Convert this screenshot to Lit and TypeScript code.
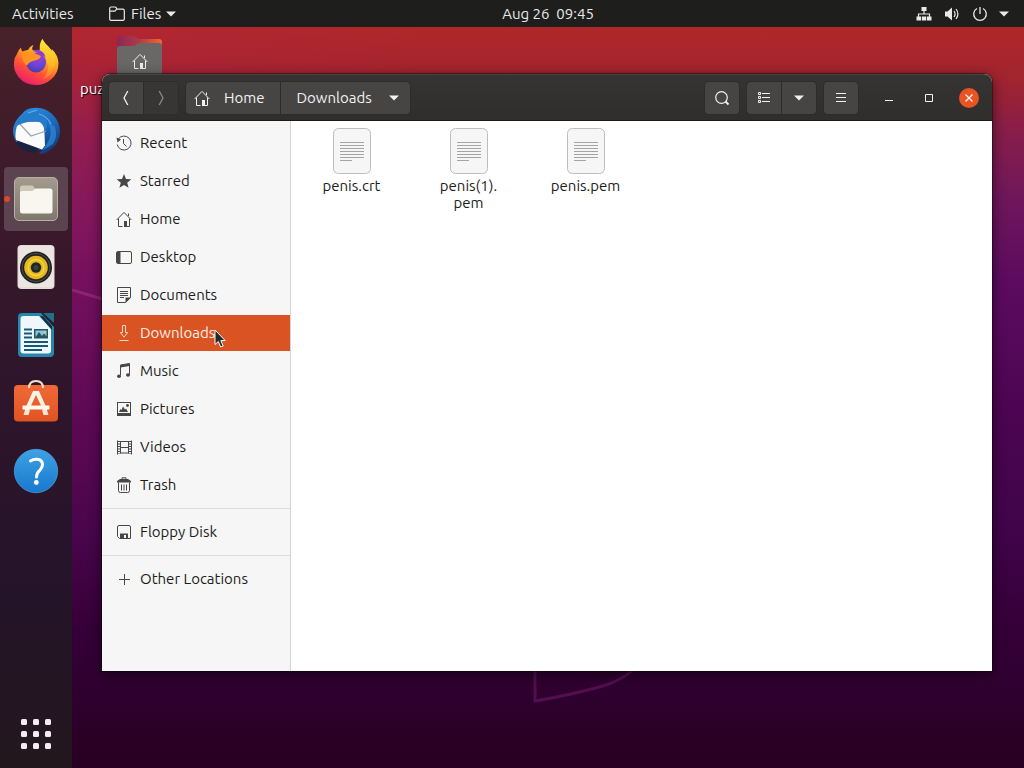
import { LitElement, html, css, svg, nothing } from "lit";
import { customElement, property, state } from "lit/decorators.js";
import { classMap } from "lit/directives/class-map.js";

/* 16px symbolic icons, drawn in the current colour */
const symbolic: Record<string, unknown> = {
  recent: svg`<path d="M2.2 4.2A7 7 0 1 1 1.2 9.5" fill="none" stroke="currentColor"/><path d="M7.5 4v4.5l3 3" fill="none" stroke="currentColor"/><path d="M.5 2.5 5 4.5 1.5 7.5z" fill="currentColor"/>`,
  starred: svg`<path d="m8 1 2 5 5.3.3-4.1 3.4 1.4 5.1L8 11.9l-4.6 2.9 1.4-5.1L.7 6.3 6 6z" fill="currentColor"/>`,
  home: svg`<path d="M.6 9 8 1.4 15.4 9M2.5 7.5v8h4M9.5 15.5h4v-8M12.5 2.5V5" fill="none" stroke="currentColor"/><path d="M8 10h3v6H8z" fill="currentColor"/>`,
  desktop: svg`<rect x=".5" y="2.5" width="15" height="12" rx="1.5" fill="none" stroke="currentColor"/><path d="M1 3h3.5v11H1z" fill="currentColor"/>`,
  documents: svg`<path d="M1.5.5h13v10l-5 5h-8z" fill="none" stroke="currentColor"/><path d="M4 4.5h8M4 6.5h8M4 8.5h8M4 10.500h4" fill="none" stroke="currentColor"/><path d="M9.500 10.500h5.500L9.500 16z" fill="currentColor"/>`,
  downloads: svg`<path d="M6.500.5h3v7h2.200L8 12.200 4.300 7.500h2.200zM3.500 15.500h9" fill="none" stroke="currentColor"/>`,
  music: svg`<path d="M4.500 12.500V2l9-1.500v11" fill="none" stroke="currentColor"/><path d="M4.500 2 13.500.5v2.500l-9 1.500z" fill="currentColor"/><ellipse cx="3" cy="13.200" rx="2" ry="1.700" fill="currentColor"/><ellipse cx="12" cy="12" rx="2" ry="1.700" fill="currentColor"/>`,
  pictures: svg`<rect x="1.500" y="1.500" width="13" height="13" fill="none" stroke="currentColor"/><path d="M1 12h14v3H1zM3 11l1.500-3 1 1L7 5.500l2 3 1-1 2 3.500z" fill="currentColor"/><circle cx="11.500" cy="4.500" r="1.400" fill="currentColor"/>`,
  videos: svg`<path d="M4.500 2v12.500M12.500 2v12.500M4 2.500h9M4 8.500h9M4 14h9" fill="none" stroke="currentColor"/><path d="M1.500 1.500v14M15.500 1.500v14" stroke="currentColor" stroke-width="1"/><path d="M3 2v13M14 2v13" stroke="currentColor" stroke-width="2" stroke-dasharray="1 1.500"/>`,
  trash: svg`<path d="M2.500 5.500v8q0 2 2 2h7q2 0 2-2v-8M5.500 7.500v6M8 7.500v6M10.500 7.500v6M6 2V.8h4V2" fill="none" stroke="currentColor"/><path d="M1 5.500V4l3-2h8l3 2v1.500z" fill="currentColor"/>`,
  floppy: svg`<path d="M3 1.500h10q1.500 0 1.500 1.500v11.500H3.500l-2-2V3q0-1.500 1.500-1.500z" fill="none" stroke="currentColor"/><path d="M4 15V9.500h8V15h-2v-4H8v4z" fill="currentColor"/>`,
  plus: svg`<path d="M8.500 3v11M3 8.500h11" fill="none" stroke="currentColor"/>`,
  back: svg`<path d="M9.800 1 6 8l3.800 7" fill="none" stroke="currentColor" stroke-width="1.300"/>`,
  forward: svg`<path d="M6.200 1 10 8l-3.800 7" fill="none" stroke="currentColor" stroke-width="1.300"/>`,
  search: svg`<circle cx="7.500" cy="7.500" r="5.800" fill="none" stroke="currentColor" stroke-width="1.200"/><path d="m11.500 11.500 3 3" stroke="currentColor" stroke-width="1.800"/>`,
  list: svg`<path d="M6 3.500h8M6 7.500h8M6 11.500h8" stroke="currentColor"/><path d="M2.500 2.500h2v2h-2zM2.500 6.500h2v2h-2zM2.500 10.500h2v2h-2z" fill="none" stroke="currentColor"/>`,
  menu: svg`<path d="M3 3.500h10M3 7.500h10M3 11.500h10" stroke="currentColor"/>`,
  down: svg`<path d="M3 5.500h10l-5 5z" fill="currentColor"/>`,
  minimize: svg`<path d="M4 10.500h8" stroke="currentColor"/>`,
  maximize: svg`<path d="M4.500 4.500h7v7h-7z" fill="none" stroke="currentColor"/>`,
  close: svg`<path d="m4.500 4.500 7 7M11.500 4.500l-7 7" stroke="currentColor" stroke-width="1.400"/>`,
  folder: svg`<path d="M.7 13V2.500q0-1.500 1.500-1.500h3.600q1.200 0 1.600 1l.5 1.200h6q1.400 0 1.400 1.500V13q0 1.300-1.300 1.300H2Q.7 14.300.7 13zM.7 5.200h5.200l1.800-2" fill="none" stroke="currentColor" stroke-width="1.200"/>`,
  network: svg`<path d="M5.500 1h5v4h-5zM.5 10.500h4.500v4H.5zM5.800 10.500h4.500v4H5.800zM11 10.500h4.500v4H11z" fill="currentColor"/><path d="M8 5v3M2.500 11V8h11v3" fill="none" stroke="currentColor" stroke-width="1.200"/>`,
  volume: svg`<path d="M1 5.500h2.500L8 1.500v13l-4.500-4H1z" fill="currentColor"/><path d="M10 5q2.200 3 0 6M12 3q3.800 5 0 10" fill="none" stroke="currentColor" stroke-width="1.200"/>`,
  power: svg`<path d="M5 2.500a6.300 6.300 0 1 0 6 0M8 1v7" fill="none" stroke="currentColor" stroke-width="1.300"/>`,
};

const icon = (name: string) =>
  html`<svg class="sym" viewBox="0 0 16 16" width="16" height="16" aria-hidden="true">${symbolic[name]}</svg>`;

/* 48px colour icons of the dock */
const launchers: { name: string; active?: boolean; art: unknown }[] = [
  {
    name: "Firefox",
    art: svg`<defs>
      <linearGradient id="fx" x1=".8" y1=".05" x2=".3" y2="1"><stop offset="0" stop-color="#ffe93c"/><stop offset=".4" stop-color="#ffa01f"/><stop offset=".7" stop-color="#ff4b3a"/><stop offset="1" stop-color="#ea1c70"/></linearGradient>
      <linearGradient id="fy" x1=".5" y1="0" x2=".5" y2="1"><stop offset="0" stop-color="#ffe93c"/><stop offset=".6" stop-color="#ffbd25"/><stop offset="1" stop-color="#ff7a2c"/></linearGradient>
      <radialGradient id="fp" cx=".6" cy=".2" r=".9"><stop offset="0" stop-color="#a63adb"/><stop offset=".5" stop-color="#6c45d8"/><stop offset="1" stop-color="#453aa8"/></radialGradient></defs>
      <g transform="translate(0 -1)"><path d="M5 16q1-4 4-6.500 0 2.500 1.500 4Q13 12 16 12q2-4 5.500-5-2 3-1 5h8q-2-5 1.800-11 2 4 6 7.500 2 2 3 5 1-1 .5-2.500Q46 17 46.500 25 46.500 35 39.500 41 33 47 24 47 13 47 6.500 39 1 32 2 24q.5-5 3-8z" fill="url(#fx)"/>
      <path d="M30.300 1q2 4 6 7.500 9 8 7 18-2 12-13 15 8-7 5-16-1-7-7-10-2-6 2-14.500z" fill="url(#fy)" opacity=".85"/>
      <circle cx="24" cy="24.500" r="10" fill="url(#fp)"/>
      <path d="M9 13q3 2 8 1 4-.5 7 2l5 2q-1 3.500-6 4.500-6 1-8 5-4-1-6-14.500z" fill="#ff9422"/><path d="M20 13q5-2.500 9 0 4 2 4.500 7-2-3.500-6-3-2-3.500-7.500-4z" fill="#8a3dcc"/></g>`,
  },
  {
    name: "Thunderbird",
    art: svg`<defs><linearGradient id="tb" x1=".2" y1="0" x2=".8" y2="1"><stop offset="0" stop-color="#2a8fe0"/><stop offset=".55" stop-color="#1c65b8"/><stop offset="1" stop-color="#13366f"/></linearGradient></defs>
      <path d="M10 7Q15 0 25 .8q9 .5 15 6.200 8 7.500 8 17 0 11-8 17.500-6 5.500-13 5.500l3-4Q12 45 5 36q-6-9-3-18 3-7 8-11z" fill="url(#tb)"/>
      <path d="M4 36q6 9 19 10l5-5-21-8z" fill="#182342"/>
      <path d="m7 15 25-.5 1 24-3 4L4 33q-2-9 3-18z" fill="#fafafa"/>
      <path d="m7 16 12 13 15-5" fill="none" stroke="#9ba5b3" stroke-width="1.200"/>
      <path d="M10 8Q17 3 25 5q11 2 10 15l-3 5q1-10-8-10.500Q12 14 3 20q2-8 7-12z" fill="#267bca"/>
      <path d="M34 13q8 9 2 22l-5 8 10-6q5-7 2-17z" fill="#2d83d3" opacity=".8"/><path d="m16 6 9-3M27 7q8 2 12 10" fill="none" stroke="#58b5ee" stroke-width="1.200"/>`,
  },
  {
    name: "Files",
    active: true,
    art: svg`<defs><linearGradient id="fm" x2="0" y2="1"><stop offset="0" stop-color="#a49b8f"/><stop offset="1" stop-color="#7f776c"/></linearGradient></defs>
      <rect x="2.500" y="2.500" width="43" height="43" rx="4.500" fill="url(#fm)" stroke="#b8aea2"/>
      <path d="M8 17v-4q0-2.500 2.500-2.500h10l3.500 4V18H8z" fill="#cfc7ba"/>
      <path d="M8 18q0-2 2-2h10l4-2.500h14q2.500 0 2.500 2.500v20q0 2.500-2.500 2.500H10.500Q8 38.500 8 36z" fill="#f9f6ef"/>`,
  },
  {
    name: "Rhythmbox",
    art: svg`<rect x="5.500" y="2" width="37" height="44" rx="4" fill="#e3dbd6"/><rect x="6.500" y="3" width="35" height="41" rx="3" fill="#ece5e1"/>
      <circle cx="24" cy="24.500" r="16" fill="#202225"/><circle cx="24" cy="24.500" r="14" fill="none" stroke="#4c4c4a"/>
      <circle cx="24" cy="24.500" r="11.800" fill="#e6b81c"/><circle cx="24" cy="24.500" r="8" fill="none" stroke="#f5d34b" stroke-width="1.500"/><circle cx="24" cy="24.500" r="5.200" fill="#1d2726"/><circle cx="24" cy="24.500" r="2.500" fill="#36443e"/>`,
  },
  {
    name: "LibreOffice Writer",
    art: svg`<path d="M10 2h19l13 14v26q0 4-4 4H10q-4 0-4-4V6q0-4 4-4z" fill="#2687ac"/><path d="M31 2h11v10z" fill="#1c7389"/>
      <path d="M11.500 5H27l12 13v21.500q0 3-3 3H11.500q-3 0-3-3V8q0-3 3-3z" fill="#f0f6fa"/><path d="M28 5h3l9 10v4z" fill="#113247"/>
      <path d="M12 18.500h8M12 22.500h8M12 26.500h8M12 31h24M12 35h24M12 39h18" stroke="#135b75" stroke-width="2"/>
      <rect x="22" y="18" width="14" height="9.500" fill="#135b75"/><rect x="23.500" y="19.500" width="11" height="6.500" fill="#8fc4df"/><path d="m23 27 4-6 3 4 2-2.500 4 4.500z" fill="#28535f"/><circle cx="33" cy="21" r="1.300" fill="#f3c83d"/>`,
  },
  {
    name: "Ubuntu Software",
    art: svg`<defs><linearGradient id="us" x2="0" y2="1"><stop offset="0" stop-color="#ef6a37"/><stop offset="1" stop-color="#e15222"/></linearGradient></defs>
      <rect x="2" y="6" width="44" height="36.500" rx="4" fill="url(#us)"/>
      <path d="M17 9q0-7 7-7t7 7" fill="none" stroke="#f4dfc7" stroke-width="2"/>
      <path d="M21 12h6l8.500 19H31l-7-15-7 15h-4.500z" fill="#fbf1e5"/><path d="M10.500 26.500h27v4h-27z" fill="#fff9ee"/><path d="m13 31-1.500 5h5l1.500-5zM30 31l1.500 5h5L35 31z" fill="#f7e5d4"/>`,
  },
  {
    name: "Help",
    art: svg`<defs><linearGradient id="hp" x2="0" y2="1"><stop offset="0" stop-color="#3da2e6"/><stop offset="1" stop-color="#1978cc"/></linearGradient></defs>
      <circle cx="24" cy="24" r="21.700" fill="url(#hp)" stroke="#57b0ec" stroke-width=".6"/>
      <path d="M18.500 14q3-2 6.500-1.700 5.500.4 5.500 5.500 0 3-3 5.800-3 2.600-3 6.400" fill="none" stroke="#fff" stroke-width="3" stroke-linecap="round"/><circle cx="24.300" cy="35.500" r="2.400" fill="#fff"/>`,
  },
];

const places = [
  ["recent", "Recent"], ["starred", "Starred"], ["home", "Home"], ["desktop", "Desktop"],
  ["documents", "Documents"], ["downloads", "Downloads"], ["music", "Music"], ["pictures", "Pictures"],
  ["videos", "Videos"], ["trash", "Trash"], null, ["floppy", "Floppy Disk"], null, ["plus", "Other Locations"],
] as (string[] | null)[];

const base = css`
  * { box-sizing: border-box; }
  button { font: inherit; color: inherit; margin: 0; padding: 0; border: 0; background: none; display: flex; align-items: center; justify-content: center; }
  a { color: inherit; text-decoration: none; }
  svg { display: block; flex: none; }
`;

@customElement("top-bar")
class TopBar extends LitElement {
  static styles = [base, css`
    :host { display: grid; grid-template-columns: 72px 1fr auto 1fr; align-items: center; height: 27px; background: #1e1e1d; color: #e9e9e9; white-space: nowrap; }
    .activities { padding-left: 12px; justify-content: start; }
    .app { justify-self: start; margin-left: 37px; gap: 6px; }
    .app .sym:last-child { margin-left: -4px; }
    .status { justify-self: end; gap: 12px; margin-right: 16px; }
    .status .sym:last-child { margin-left: -4px; margin-right: -4px; }
    .clock { white-space: pre; }
  `];
  render() {
    return html`
      <button class="activities">Activities</button>
      <button class="app">${icon("folder")}Files${icon("down")}</button>
      <button class="clock">Aug 26  09:45</button>
      <button class="status" aria-label="System menu">${icon("network")}${icon("volume")}${icon("power")}${icon("down")}</button>`;
  }
}

@customElement("app-dock")
class AppDock extends LitElement {
  static styles = [base, css`
    :host { display: flex; flex-direction: column; align-items: center; gap: 4px; padding: 4px 4px 2px; background: linear-gradient(#48212a, #3c1a2a 22%, #30152b 45%, #25142a 75%, #23171d); }
    .tile { position: relative; width: 64px; height: 64px; border-radius: 4px; }
    .tile.active { background: #5b434f; }
    .dot { position: absolute; left: 0; top: 29px; width: 6px; height: 6px; border-radius: 3px; background: #d9482b; }
    .apps { margin-top: auto; }
  `];
  render() {
    return html`
      ${launchers.map((l) => html`
        <button class=${classMap({ tile: true, active: !!l.active })} aria-label=${l.name}>
          ${l.active ? html`<span class="dot"></span>` : nothing}
          <svg viewBox="0 0 48 48" width="48" height="48">${l.art}</svg>
        </button>`)}
      <button class="tile apps" aria-label="Show Applications">
        <svg viewBox="0 0 30 30" width="30" height="30" fill="#f4ecf2">
          ${[0, 12, 24].map((y) => [0, 12, 24].map((x) => svg`<rect x=${x} y=${y} width="6" height="6" rx="1.500"/>`))}
        </svg>
      </button>`;
  }
}

@customElement("file-item")
class FileItem extends LitElement {
  @property({ attribute: false }) lines: string[] = [];
  static styles = [base, css`
    .file { width: 100%; flex-direction: column; gap: 2px; line-height: 17px; color: #1c1c1c; }
  `];
  render() {
    return html`
      <button class="file">
        <svg viewBox="0 0 48 48" width="48" height="48" aria-hidden="true">
          <rect x="5.500" y="1.500" width="37" height="45" rx="5" fill="#f6f6f6" stroke="#bdbdbd"/>
          <path d="M12 15.500h24M12 18.500h24M12 21.500h24M12 24.500h24M12 27.500h24M12 30.500h24M12 33.500h12" stroke="#a4a4a4"/>
        </svg>
        <span>${this.lines.map((l, i) => html`${i ? html`<br />` : nothing}${l}`)}</span>
      </button>`;
  }
}

@customElement("files-window")
class FilesWindow extends LitElement {
  @state() current = "Downloads";
  static styles = [base, css`
    :host { display: flex; flex-direction: column; border-radius: 8px 8px 0 0; background: #fff; box-shadow: 0 0 1px 1px rgba(0, 0, 0, 0.4), 0 3px 14px rgba(0, 0, 0, 0.55); }
    .header { display: flex; align-items: center; height: 47px; padding: 0 11px 0 7px; border-radius: 8px 8px 0 0; background: linear-gradient(#353433, #2f2e2d); border-top: 1px solid #454340; border-bottom: 1px solid #1b1a19; color: #f2f2f2; }
    .group { display: flex; border-radius: 4px; background: #474543; box-shadow: 0 0 0 1px #2d2c2b; }
    .group button { height: 32px; width: 34px; }
    .group button + button { border-left: 1px solid #2c2b2a; width: 35px; }
    .group .off { background: #383635; color: #8a8886; border-radius: 0 4px 4px 0; }
    .path { margin-left: 8px; margin-right: auto; }
    .path .crumb { width: auto; padding: 0 16px 0 8px; gap: 14px; }
    .path .crumb + .crumb { width: auto; padding: 0 8px 0 15px; }
    .tools { display: flex; gap: 8px; margin-right: 19px; }
    .controls { display: flex; gap: 16px; }
    .controls button { width: 24px; height: 24px; }
    .round { width: 20px; height: 20px; border-radius: 10px; background: #e95420; display: grid; place-items: center; }
    .body { flex: 1; display: grid; grid-template-columns: 189px 1fr; min-height: 0; }
    .sidebar { display: flex; flex-direction: column; gap: 2px; padding-top: 4px; background: #f6f6f6; border-right: 1px solid #d4d4d4; color: #1c1c1c; }
    .place { position: relative; display: flex; align-items: center; gap: 8px; height: 36px; padding-left: 14px; white-space: nowrap; }
    .place .sym { color: #474747; }
    .place.selected { background: #d95323; color: #fdeee6; }
    .place.selected .sym { color: #fdd9c8; }
    .rule { width: 100%; height: 1px; margin: 3px 0; border: 0; background: #dcdcdc; }
    .pointer { position: absolute; left: 112px; top: 14px; }
    .files { display: grid; grid-template-columns: repeat(auto-fill, 117px); align-content: start; padding: 6px 2px; }
  `];
  render() {
    return html`
      <header class="header">
        <div class="group">
          <button aria-label="Back">${icon("back")}</button>
          <button class="off" aria-label="Forward">${icon("forward")}</button>
        </div>
        <div class="group path">
          <button class="crumb">${icon("home")}Home</button>
          <button class="crumb">Downloads${icon("down")}</button>
        </div>
        <div class="tools">
          <div class="group"><button aria-label="Search">${icon("search")}</button></div>
          <div class="group">
            <button aria-label="List view">${icon("list")}</button>
            <button aria-label="View options">${icon("down")}</button>
          </div>
          <div class="group"><button aria-label="Menu">${icon("menu")}</button></div>
        </div>
        <div class="controls">
          <button aria-label="Minimize">${icon("minimize")}</button>
          <button aria-label="Maximize">${icon("maximize")}</button>
          <button aria-label="Close"><span class="round">${icon("close")}</span></button>
        </div>
      </header>
      <div class="body">
        <nav class="sidebar" aria-label="Places">
          ${places.map((p) => p
            ? html`<a href="#${p[0]}" class=${classMap({ place: true, selected: p[1] === this.current })} @click=${() => (this.current = p[1])}>
                ${icon(p[0])}<span>${p[1]}</span>
                ${p[1] === this.current ? html`<svg class="pointer" viewBox="0 0 12 19" width="12" height="19" aria-hidden="true"><path d="M1 1v14.500l3.300-3 2.400 5.500 2.500-1-2.400-5.400h4.400z" fill="#20292c" stroke="#fff"/></svg>` : nothing}
              </a>`
            : html`<hr class="rule" />`)}
        </nav>
        <main class="files">
          ${[["penis.crt"], ["penis(1).", "pem"], ["penis.pem"]].map((l) => html`<file-item .lines=${l}></file-item>`)}
        </main>
      </div>`;
  }
}

@customElement("app-root")
class AppRoot extends LitElement {
  static styles = [base, css`
    :host { display: grid; grid-template: auto 1fr / 72px 1fr; height: 100vh; overflow: hidden; font: 15px/18px "Ubuntu", "Noto Sans", sans-serif; }
    top-bar { grid-column: 1 / -1; }
    .desktop { position: relative; overflow: hidden; background: radial-gradient(ellipse 380px 420px at 0 25%, rgba(190, 30, 90, 0.3), transparent), linear-gradient(#b02828, #a1242f 7%, #851d4c 15%, #6d165c 24%, #5d0b60 34%, #4c0552 52%, #40044a 68%, #36003a 80%, #2d002c 92%, #280020); }
    .streaks { position: absolute; inset: 0; width: 100%; height: 100%; }
    .shortcut { position: absolute; left: 8px; top: 7px; width: 120px; display: flex; flex-direction: column; color: #fff; text-shadow: 1px 1px 1px #000; }
    .shortcut svg { margin-left: 36px; }
    files-window { position: absolute; inset: 47px 32px 97px 30px; }
  `];
  render() {
    return html`
      <top-bar></top-bar>
      <app-dock></app-dock>
      <div class="desktop">
        <svg class="streaks" aria-hidden="true" fill="none" stroke="#7a1a72">
          <path d="m0 263 34 10" stroke="#b04080" stroke-width="3" opacity=".45"/>
          <path d="M463 640v34q46-8 74-17 15-6 24-14" stroke-width="3" opacity=".5"/>
        </svg>
        <a class="shortcut" href="#puz">
          <svg viewBox="0 0 48 46" width="48" height="46" aria-hidden="true">
            <defs><linearGradient id="fold" x2="1"><stop stop-color="#8c2753"/><stop offset=".5" stop-color="#b03a45"/><stop offset="1" stop-color="#ef6a2c"/></linearGradient></defs>
            <path d="M1 5q0-3 3-3h14l5 3h20q3 0 3 3v8H1z" fill="url(#fold)"/>
            <path d="M1 15q0-3 3-3h14l5-3h20q3 0 3 3v31H1z" fill="#6a6867"/>
            <g transform="translate(16 19)" color="#eee">${symbolic.home}</g>
          </svg>
          <span>puz</span>
        </a>
        <files-window></files-window>
      </div>`;
  }
}
